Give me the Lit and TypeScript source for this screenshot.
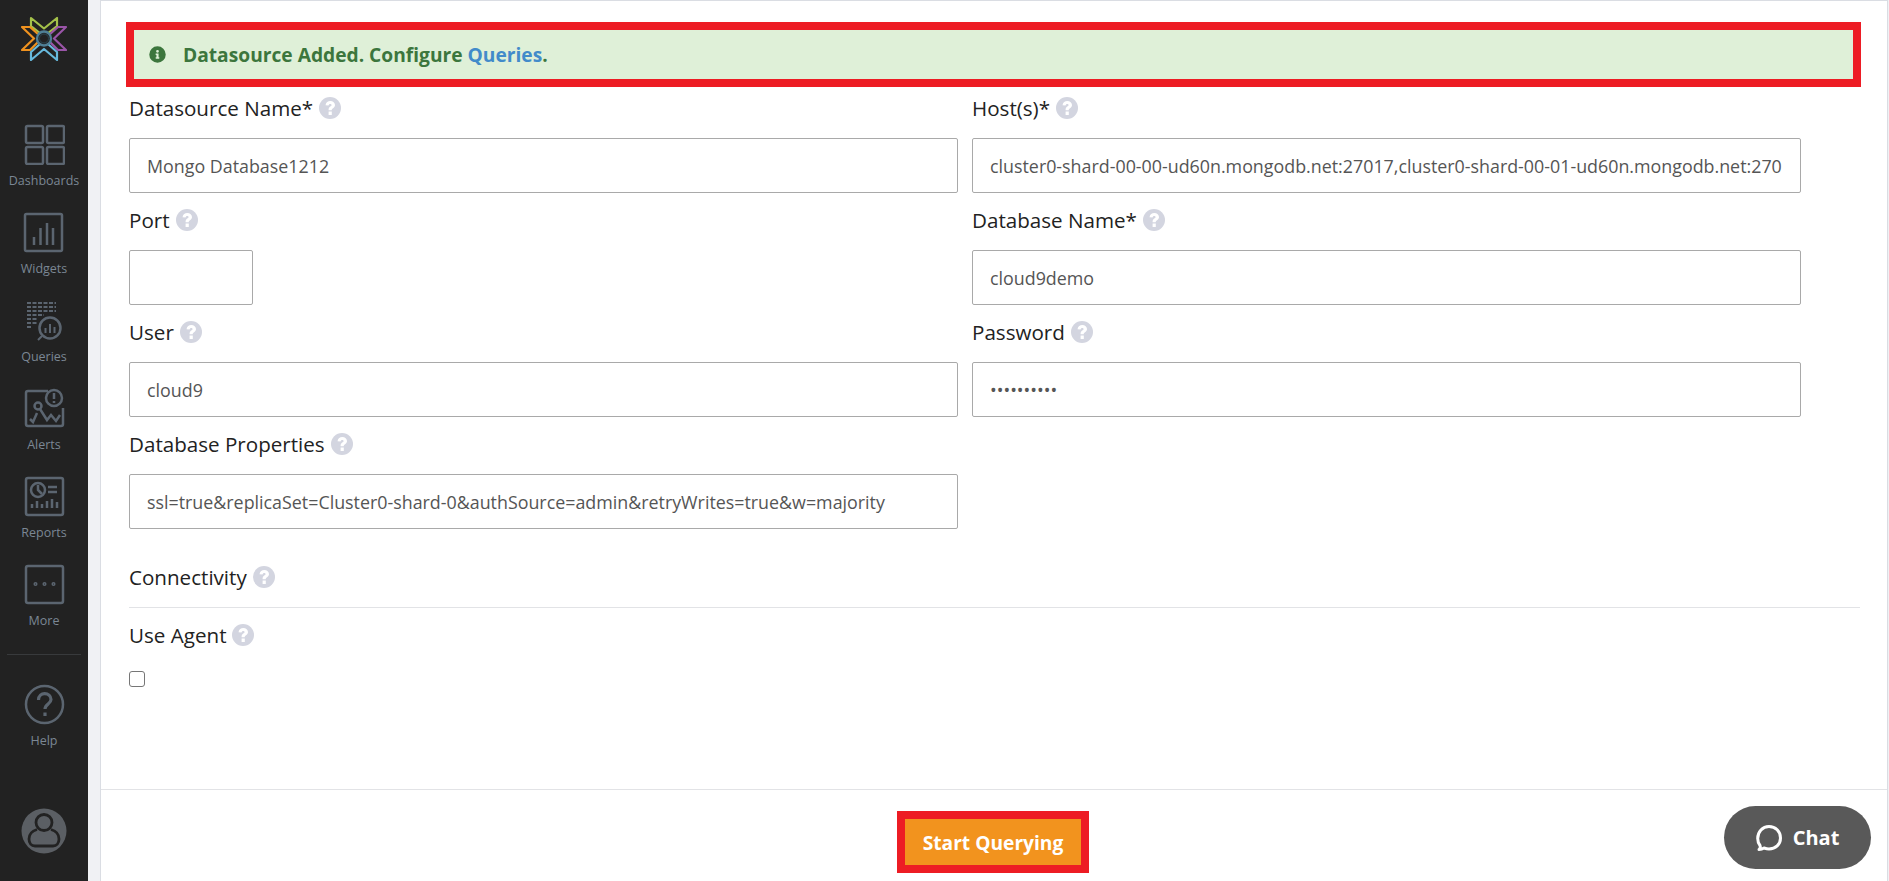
import { LitElement, html, css, svg } from "lit";
import { customElement } from "lit/decorators.js";

const icons: Record<string, unknown> = {
  Dashboards: svg`<rect x="2" y="2" width="17" height="17" rx="1.5"/><rect x="23" y="2" width="17" height="17" rx="1.5"/><rect x="2" y="23" width="17" height="17" rx="1.5"/><rect x="23" y="23" width="17" height="17" rx="1.5"/>`,
  Widgets: svg`<rect x="2" y="2" width="37" height="37" rx="1.5"/><path d="M11 33v-8M17.500 33V16M24 33V11M30 33V16"/>`,
  Queries: svg`<path stroke-dasharray="4 1.500" stroke-width="2" d="M3 3h29M3 7h29M3 11h29M3 15h17M3 19h11M3 23h11M3 27h5"/><circle cx="26" cy="28" r="10.500" fill="#222"/><path stroke-width="2" d="M21.500 33v-5M26 33v-9M30.500 33v-6M18 36l-4 4"/>`,
  Alerts: svg`<path d="M24 3H4a2 2 0 0 0-2 2v31a2 2 0 0 0 2 2h33a2 2 0 0 0 2-2V20"/><circle cx="30" cy="10" r="8"/><path d="M30 5v6M30 13v2"/><circle cx="14" cy="18" r="3.500"/><path d="M6 31l3 3 4-9M16 21l7 11 4-5 5 6 4-6"/>`,
  Reports: svg`<rect x="2" y="2" width="37" height="37" rx="2"/><circle cx="14" cy="14" r="7"/><path d="M14 9v5l4 4M24 11h9M24 16h9M8 32v-4M13 32v-7M18 32v-4M23 32v-7M28 32v-9M33 32v-6"/>`,
  More: svg`<rect x="2" y="2" width="37" height="37" rx="2"/><circle cx="11.500" cy="20" r="1.300" stroke-width="1.500"/><circle cx="20.500" cy="20" r="1.300" stroke-width="1.500"/><circle cx="29.500" cy="20" r="1.300" stroke-width="1.500"/>`,
  Help: svg`<circle cx="20.500" cy="20.500" r="18.500"/><path stroke-width="3.200" d="M14.500 16c0-9 12.500-8 12.500-.5 0 4.500-6 4.500-6 9.500M21 28.500v3.500"/>`,
};

@customElement("side-bar")
class SideBar extends LitElement {
  static styles = css`
    :host { display: flex; flex-direction: column; align-items: center; width: 88px; flex: none; background: #222222; font-family: "Open Sans", sans-serif; }
    .logo { width: 46px; height: 46px; margin-top: 15px; margin-bottom: 63px; margin-right: 1px; }
    .item { display: flex; flex-direction: column; align-items: center; height: 88px; color: #7b8794; font-size: 12.500px; line-height: 16px; }
    .item svg { width: 41px; height: 41px; margin-bottom: 8px; fill: none; stroke: #5b6570; stroke-width: 2.500; display: block; }
    .rule { width: 74px; height: 1px; background: #383a3c; margin: 2px 0 29px; flex: none; }
    .avatar { width: 46px; height: 46px; margin-top: 36px; margin-right: 1px; display: block; }
  `;
  render() {
    return html`
      <svg class="logo" viewBox="0 0 46 46" fill="none" stroke-width="2.200" stroke-linejoin="round">
        <path stroke="#a4c14a" d="M10 3L23 13.500 36 3v8l-9.500 7.500h-7L10 11z"/>
        <path stroke="#9a55a8" d="M45 12h-8l-9 8v6l9 9h8L33 23.500z"/>
        <path stroke="#67b9dc" d="M10 45l13-11 13 11v-8l-9-8h-8l-9 8z"/>
        <path stroke="#ef921f" d="M1 12h8l9 8v6l-9 9H1l12-11.500z"/>
        <circle cx="23" cy="23.500" r="7" fill="#222" stroke="#4f7f95" stroke-width="2.400"/>
        <circle cx="23" cy="23.500" r="4.500" stroke="#2a4550" stroke-width="1"/>
      </svg>
      ${Object.keys(icons).map(
        (k) => html`
          ${k === "Help" ? html`<div class="rule"></div>` : ""}
          <div class="item"><svg viewBox="0 0 41 41" stroke-linecap="butt">${icons[k]}</svg>${k}</div>
        `
      )}
      <svg class="avatar" viewBox="0 0 46 46">
        <circle cx="23" cy="23" r="22.500" fill="#5b5f64"/>
        <circle cx="23" cy="14.500" r="8" fill="none" stroke="#222" stroke-width="2.800"/>
        <path fill="none" stroke="#222" stroke-width="2.800" d="M16 21.500c-5 1.500-8 4.500-8 9.500 0 4.500 2.500 7 6 7h18c3.500 0 6-2.500 6-7 0-5-3-8-8-9.500"/>
      </svg>
    `;
  }
}

const Q = html`<svg class="q" viewBox="0 0 22 22"><circle cx="11" cy="11" r="11" fill="#d3d5e0"/><path d="M6.500 8.200C7 5.300 8.800 4 11.300 4c2.700 0 4.700 1.700 4.700 4 0 3.100-3.300 3.300-3.300 5.200H9.600c-.2-3.500 3-3.700 3-5.100 0-.7-.6-1.200-1.400-1.200-.9 0-1.400.6-1.700 1.700zM9.600 14.500h3.200V18H9.600z" fill="#fff"/></svg>`;

@customElement("app-root")
class AppRoot extends LitElement {
  static styles = css`
    :host { display: flex; width: 100%; height: 881px; overflow: hidden; font-family: "Open Sans", sans-serif; background: #f0f1f4; position: relative; }
    .main { margin-left: 12px; margin-right: 1px; flex: 1; min-width: 0; background: #fff; border: 1px solid #dadde3; border-bottom: none; display: flex; flex-direction: column; }
    .body { flex: 1; padding: 21px 0 0 25px; }
    .alert { width: 1735px; height: 65px; box-sizing: border-box; border: 8px solid #ed1c24; background: #dff0d8; color: #3c763d; font-weight: 700; font-size: 19.200px; display: flex; align-items: center; padding-left: 15px; white-space: pre; }
    .alert svg { width: 17px; height: 17px; margin-right: 17px; fill: #3c763d; }
    .alert a { color: #428bca; }
    .grid { display: grid; grid-template-columns: 829px 829px; column-gap: 14px; margin-left: 3px; }
    .field { height: 112px; box-sizing: border-box; padding-top: 5px; }
    .label { display: flex; align-items: center; gap: 6px; height: 32px; font-size: 20.600px; color: #222; margin-bottom: 14px; }
    .q { width: 22px; height: 22px; flex: none; }
    .input { box-sizing: border-box; height: 55px; border: 1px solid #a9a9a9; border-radius: 2px; font-size: 17.850px; color: #555; display: flex; align-items: center; padding: 0 17px; white-space: nowrap; overflow: hidden; }
    .port { width: 124px; }
    .conn { margin: 24px 0 0 3px; width: 1731px; height: 49px; box-sizing: border-box; border-bottom: 1px solid #e2e3e6; }
    .conn .label { margin: 0; height: 36px; }
    .agent { margin: 11px 0 0 3px; }
    .agent .label { margin: 0 0 20px; }
    .check { display: block; width: 16px; height: 16px; box-sizing: border-box; border: 1.500px solid #767676; border-radius: 3px; }
    .foot { height: 92px; box-sizing: border-box; flex: none; border-top: 1px solid #e2e3e6; display: flex; justify-content: center; padding: 21px 2px 0 0; }
    .btn { box-sizing: border-box; width: 192px; height: 62px; border: 8px solid #ed1c24; background: #f2931e; color: #fff; font-weight: 700; font-size: 19.200px; display: flex; align-items: center; justify-content: center; }
    .chat { position: absolute; left: 1724px; top: 806px; width: 147px; height: 63px; border-radius: 32px; background: #595959; color: #fff; font-weight: 700; font-size: 20px; display: flex; align-items: center; justify-content: center; gap: 11px; }
    .chat svg { width: 26px; height: 28px; fill: none; stroke: #fff; stroke-width: 3; }
  `;
  field(label: string, value: string, cls = "") {
    return html`<div class="field"><div class="label">${label}${Q}</div><div class="input ${cls}">${value}</div></div>`;
  }
  render() {
    return html`
      <side-bar></side-bar>
      <div class="main">
        <div class="body">
          <div class="alert">
            <svg viewBox="0 0 512 512"><path d="M256 8a248 248 0 1 0 0 496 248 248 0 0 0 0-496zm0 110a42 42 0 1 1 0 84 42 42 0 0 1 0-84zm56 254c0 7-5 12-12 12h-88c-7 0-12-5-12-12v-24c0-7 5-12 12-12h12v-64h-12c-7 0-12-5-12-12v-24c0-7 5-12 12-12h64c7 0 12 5 12 12v100h12c7 0 12 5 12 12z"/></svg>
            <span>Datasource Added. Configure <a>Queries</a>.</span>
          </div>
          <div class="grid">
            ${this.field("Datasource Name*", "Mongo Database1212")}
            ${this.field("Host(s)*", "cluster0-shard-00-00-ud60n.mongodb.net:27017,cluster0-shard-00-01-ud60n.mongodb.net:270")}
            ${this.field("Port", "", "port")}
            ${this.field("Database Name*", "cloud9demo")}
            ${this.field("User", "cloud9")}
            ${this.field("Password", "••••••••••")}
            ${this.field("Database Properties", "ssl=true&replicaSet=Cluster0-shard-0&authSource=admin&retryWrites=true&w=majority")}
          </div>
          <div class="conn"><div class="label">Connectivity${Q}</div></div>
          <div class="agent"><div class="label">Use Agent${Q}</div><div class="check"></div></div>
        </div>
        <div class="foot"><div class="btn">Start Querying</div></div>
      </div>
      <div class="chat">
        <svg viewBox="0 0 26 28"><path stroke-linejoin="round" d="M3 25.500c1.500-1 1.500-2.500 1-4C2.500 19.500 1.700 17 1.700 14.500 1.700 8 6.500 2.500 13 2.500s11.500 5 11.500 11.500S19.500 25 13 25c-2 0-3.500-.5-5-1-1.500 1-3 1.500-5 1.500z"/></svg>
        Chat
      </div>
    `;
  }
}
